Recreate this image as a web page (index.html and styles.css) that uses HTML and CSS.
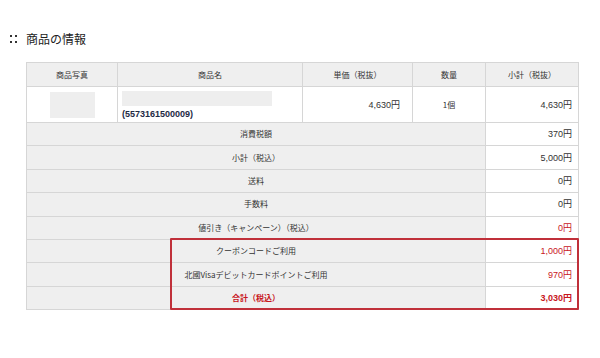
FILE: index.html
```html
<!DOCTYPE html>
<html lang="ja">
<head>
    <meta charset="UTF-8">
    <meta name="viewport" content="width=device-width, initial-scale=1.0">
    <title>商品の情報</title>
    <link rel="stylesheet" href="styles.css">
</head>
<body>

<div class="section">
    <h2 class="section-title"><span class="dots"></span>商品の情報</h2>

    <div class="order-wrap">
        <table class="order">
            <colgroup>
                <col class="col-photo">
                <col class="col-name">
                <col class="col-price">
                <col class="col-qty">
                <col class="col-sub">
            </colgroup>
            <tr class="head">
                <th>商品写真</th>
                <th>商品名</th>
                <th>単価（税抜）</th>
                <th>数量</th>
                <th>小計（税抜）</th>
            </tr>
            <tr class="item">
                <td class="photo"><div class="thumb"></div></td>
                <td class="name">
                    <div class="name-bar"></div>
                    <strong>(5573161500009)</strong>
                </td>
                <td class="num price">4,630円</td>
                <td class="qty">1個</td>
                <td class="num">4,630円</td>
            </tr>
            <tr class="sum">
                <th colspan="4">消費税額</th>
                <td class="num">370円</td>
            </tr>
            <tr class="sum">
                <th colspan="4">小計（税込）</th>
                <td class="num">5,000円</td>
            </tr>
            <tr class="sum">
                <th colspan="4">送料</th>
                <td class="num">0円</td>
            </tr>
            <tr class="sum">
                <th colspan="4">手数料</th>
                <td class="num">0円</td>
            </tr>
            <tr class="sum">
                <th colspan="4">値引き（キャンペーン）（税込）</th>
                <td class="num red">0円</td>
            </tr>
            <tr class="sum">
                <th colspan="4">クーポンコードご利用</th>
                <td class="num red">1,000円</td>
            </tr>
            <tr class="sum">
                <th colspan="4">北國Visaデビットカードポイントご利用</th>
                <td class="num red">970円</td>
            </tr>
            <tr class="sum total">
                <th colspan="4">合計（税込）</th>
                <td class="num red">3,030円</td>
            </tr>
        </table>
        <!-- highlight around the discount / total rows -->
        <div class="highlight"></div>
    </div>
</div>

</body>
</html>
```

FILE: styles.css
```css
body {
    margin: 0;
    padding: 0;
    background: #fff;
    color: #333;
    font-family: "Noto Sans CJK JP", "Liberation Sans", sans-serif;
}
.section {
    padding: 32px 22px 0 10px;
}
.section-title {
    margin: 0 0 16px;
    font-size: 12px;
    font-weight: normal;
    line-height: 14px;
    color: #222;
    display: flex;
    align-items: center;
}
/* 2x2 square bullet in front of the heading */
.dots {
    position: relative;
    display: inline-block;
    width: 7px;
    height: 8px;
    margin-right: 9px;
}
.dots::before {
    content: "";
    position: absolute;
    left: 0;
    top: 0;
    width: 2px;
    height: 2px;
    background: #333;
    box-shadow: 5px 0 #333, 0 6px #333, 5px 6px #333;
}
.order-wrap {
    position: relative;
    margin-left: 16px;
    width: 552px;
}
.order {
    width: 552px;
    border-collapse: collapse;
    table-layout: fixed;
    font-size: 8px;
    line-height: 10px;
}
.col-photo { width: 91px; }
.col-name { width: 185px; }
.col-price { width: 110px; }
.col-qty { width: 73px; }
.col-sub { width: 93px; }
.order th,
.order td {
    border: 1px solid #d6d6d6;
    padding: 0 6px;
}
.order th {
    background: #efefef;
    font-weight: normal;
    text-align: center;
}
.head th {
    height: 23px;
}
.item td {
    height: 35px;
}
.photo {
    text-align: center;
}
.thumb {
    width: 45px;
    height: 26px;
    margin: 0 auto;
    background: #eee;
}
.name {
    padding-left: 4px !important;
}
.name-bar {
    width: 150px;
    height: 15px;
    background: #eee;
    margin-bottom: 3px;
}
.name strong {
    font-family: "Liberation Sans", sans-serif;
    font-size: 9px;
    color: #1e2a44;
}
.qty {
    text-align: center;
}
.num {
    text-align: right;
    font-size: 9px;
    font-family: "Liberation Sans", "Noto Sans CJK JP", sans-serif;
}
.price {
    padding-right: 12px !important;
}
.sum th,
.sum td {
    height: 22.4px;
}
.red {
    color: #c8161d;
}
.total th,
.total td {
    color: #c8161d;
    font-weight: bold;
}
.highlight {
    position: absolute;
    left: 144px;
    top: 176px;
    width: 409px;
    height: 72px;
    border: 2px solid #c0303a;
    box-sizing: border-box;
    border-radius: 1px;
    pointer-events: none;
}
```
